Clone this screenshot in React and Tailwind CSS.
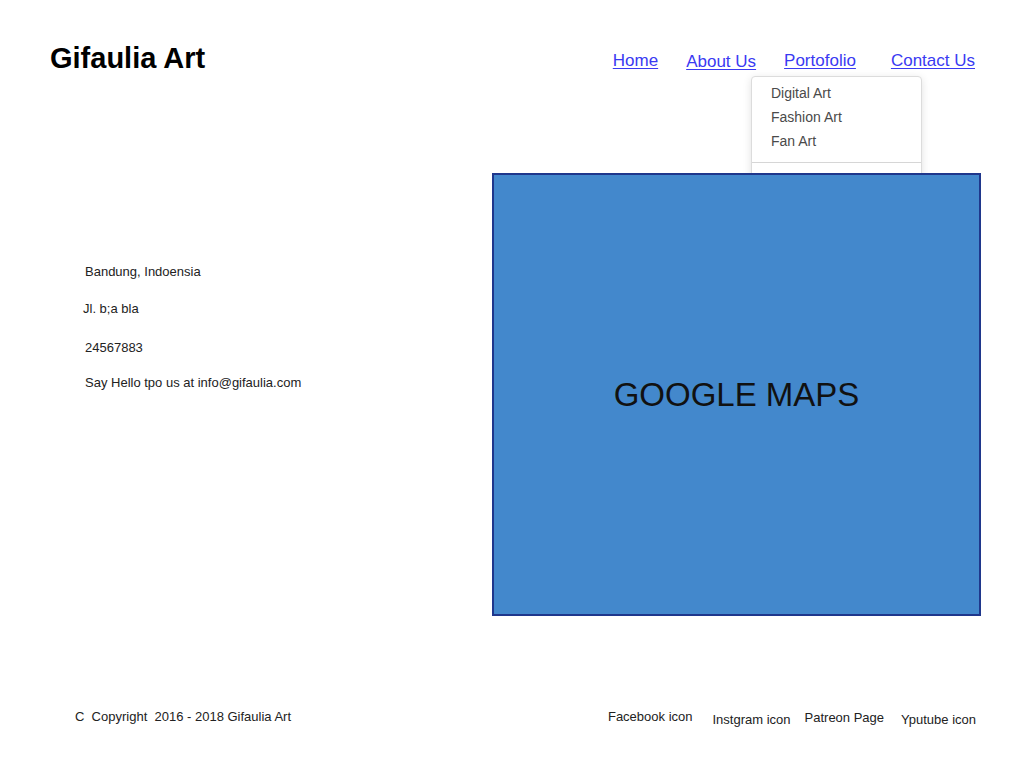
import React from 'react';

const NAV = [
  { label: 'Home', cls: 'ml-0' },
  { label: 'About Us', cls: 'ml-[28px] mt-px' },
  { label: 'Portofolio', cls: 'ml-[28px]' },
  { label: 'Contact Us', cls: 'ml-[35px]' },
];

const DROPDOWN = ['Digital Art', 'Fashion Art', 'Fan Art'];

export default function App() {
  return (
    <div className="relative w-[1024px] h-[768px] overflow-hidden bg-white font-['Liberation_Sans',Arial,sans-serif]">
      {/* Header */}
      <header className="flex items-start justify-between pl-[50px] pr-[49px] pt-[41px]">
        <h1 className="text-[29px] leading-[34px] font-bold text-black">Gifaulia Art</h1>
        <nav className="flex items-start mt-[10px]">
          {NAV.map((item) => (
            <a
              key={item.label}
              href="#"
              className={`${item.cls} text-[17px] leading-[20px] text-[#3a3af2] underline underline-offset-2`}
            >
              {item.label}
            </a>
          ))}
        </nav>
      </header>

      {/* Portofolio dropdown */}
      <div className="absolute left-[751px] top-[76px] w-[171px] h-[140px] z-0 bg-white border border-[#dcdcdc] rounded-[4px] shadow-[0_2px_8px_rgba(0,0,0,0.12)] pt-[4px]">
        {DROPDOWN.map((d) => (
          <div key={d} className="pl-[19px] text-[14px] leading-[24px] text-[#4a4a4a]">
            {d}
          </div>
        ))}
        <div className="mt-[9px] border-t border-[#d6d6d6]" />
      </div>

      {/* Main */}
      <main className="flex mt-[98px]">
        <div className="w-[492px] pl-[85px] pt-[91px] text-[13px] leading-[15px] text-[#222]">
          <p>Bandung, Indoensia</p>
          <p className="mt-[22px] -ml-[2px]">Jl. b;a bla</p>
          <p className="mt-[24px]">24567883</p>
          <p className="mt-[20px]">Say Hello tpo us at info@gifaulia.com</p>
        </div>
        <div className="relative z-10 w-[489px] h-[443px] border-2 border-[#1f378c] bg-[#4388cc] flex items-center justify-center">
          <span className="text-[33px] text-[#111]">GOOGLE MAPS</span>
        </div>
      </main>

      {/* Footer */}
      <footer className="flex items-start justify-between mt-[93px] pl-[75px] pr-[48px] text-[13px] leading-[15px] text-[#222]">
        <p className="whitespace-pre">C  Copyright  2016 - 2018 Gifaulia Art</p>
        <div className="flex items-start">
          <a href="#">Facebook icon</a>
          <a href="#" className="ml-[20px] mt-[3px]">Instgram icon</a>
          <a href="#" className="ml-[14px] mt-px">Patreon Page</a>
          <a href="#" className="ml-[17px] mt-[3px]">Yputube icon</a>
        </div>
      </footer>
    </div>
  );
}
